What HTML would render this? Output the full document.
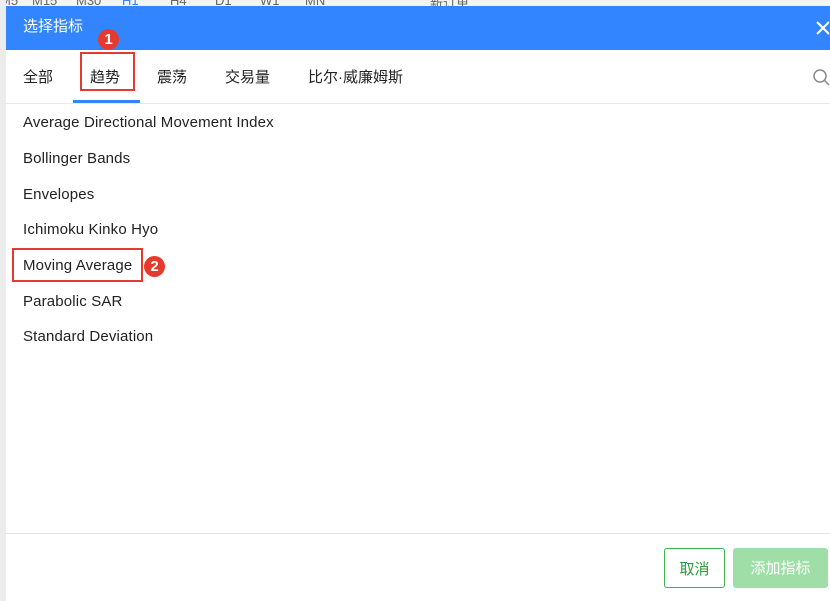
<!DOCTYPE html>
<html><head><meta charset="utf-8"><style>
*{margin:0;padding:0;box-sizing:border-box}
body{width:830px;height:601px;overflow:hidden;background:#fff;font-family:"Liberation Sans","Noto Sans CJK SC",sans-serif;position:relative}
.bgtop{position:absolute;left:0;top:0;width:830px;height:6px;background:#f4f4f4;overflow:hidden;font-size:13px;color:#666}
.bgtop span{position:absolute;top:-7px}
.bgleft{position:absolute;left:0;top:0;width:6px;height:601px;background:#ececec}
.dlg{position:absolute;left:6px;top:6px;width:824px;height:595px;background:#fff}
.hd{height:44px;background:#3385ff;color:#fff;font-size:15px;line-height:42px;padding-left:17px;position:relative}
.tab{position:absolute;top:60px;font-size:15px;color:#222}
.ul{position:absolute;left:67px;top:94px;width:67px;height:3px;background:#3385ff}
.sep{position:absolute;left:0;top:97px;width:824px;height:1px;background:#e8e8e8}
.it{position:absolute;left:17px;font-size:15px;letter-spacing:0.15px;color:#222}
.foot{position:absolute;left:0;top:527px;width:824px;height:1px;background:#e4e4e4}
.btn{position:absolute;top:542px;height:40px;border-radius:3px;font-size:15px;line-height:42px;text-align:center}
.red{position:absolute;border:2px solid #e53a2e}
.badge{position:absolute;width:21px;height:21px;border-radius:50%;background:#e53a2e;color:#fff;font-size:15px;font-weight:bold;text-align:center;line-height:21px}
</style></head><body>
<div class="bgtop"><span style="left:0">M5</span><span style="left:32px">M15</span><span style="left:76px">M30</span><span style="left:122px;color:#3385ff">H1</span><span style="left:170px">H4</span><span style="left:215px">D1</span><span style="left:260px">W1</span><span style="left:305px">MN</span><span style="left:430px">新订单</span></div>
<div class="bgleft"></div>
<div class="dlg">
<div class="hd">选择指标
<svg style="position:absolute;left:810px;top:15px" width="14" height="14"><path d="M1 1L13 13M13 1L1 13" stroke="#fff" stroke-width="2"/></svg></div>
<div class="tab" style="left:17px">全部</div>
<div class="tab" style="left:84px">趋势</div>
<div class="tab" style="left:151px">震荡</div>
<div class="tab" style="left:219px">交易量</div>
<div class="tab" style="left:302px">比尔·威廉姆斯</div>
<svg style="position:absolute;left:806px;top:62px" width="18" height="18"><circle cx="8" cy="8" r="6" fill="none" stroke="#888" stroke-width="1.5"/><line x1="12.5" y1="12.5" x2="17" y2="17" stroke="#888" stroke-width="1.5"/></svg>
<div class="ul"></div><div class="sep"></div>
<div class="it" style="top:108px">Average Directional Movement Index</div>
<div class="it" style="top:144px">Bollinger Bands</div>
<div class="it" style="top:180px">Envelopes</div>
<div class="it" style="top:215px">Ichimoku Kinko Hyo</div>
<div class="it" style="top:251px">Moving Average</div>
<div class="it" style="top:287px">Parabolic SAR</div>
<div class="it" style="top:322px">Standard Deviation</div>
<div class="foot"></div>
<div class="btn" style="left:658px;width:61px;border:1px solid #3db34d;color:#2a9a3a">取消</div>
<div class="btn" style="left:727px;width:95px;background:#a0dea8;color:#fff">添加指标</div>
</div>
<div class="red" style="left:80px;top:52px;width:55px;height:39px"></div>
<div class="badge" style="left:98px;top:29px">1</div>
<div class="red" style="left:12px;top:248px;width:131px;height:34px"></div>
<div class="badge" style="left:144px;top:256px">2</div>
</body></html>
